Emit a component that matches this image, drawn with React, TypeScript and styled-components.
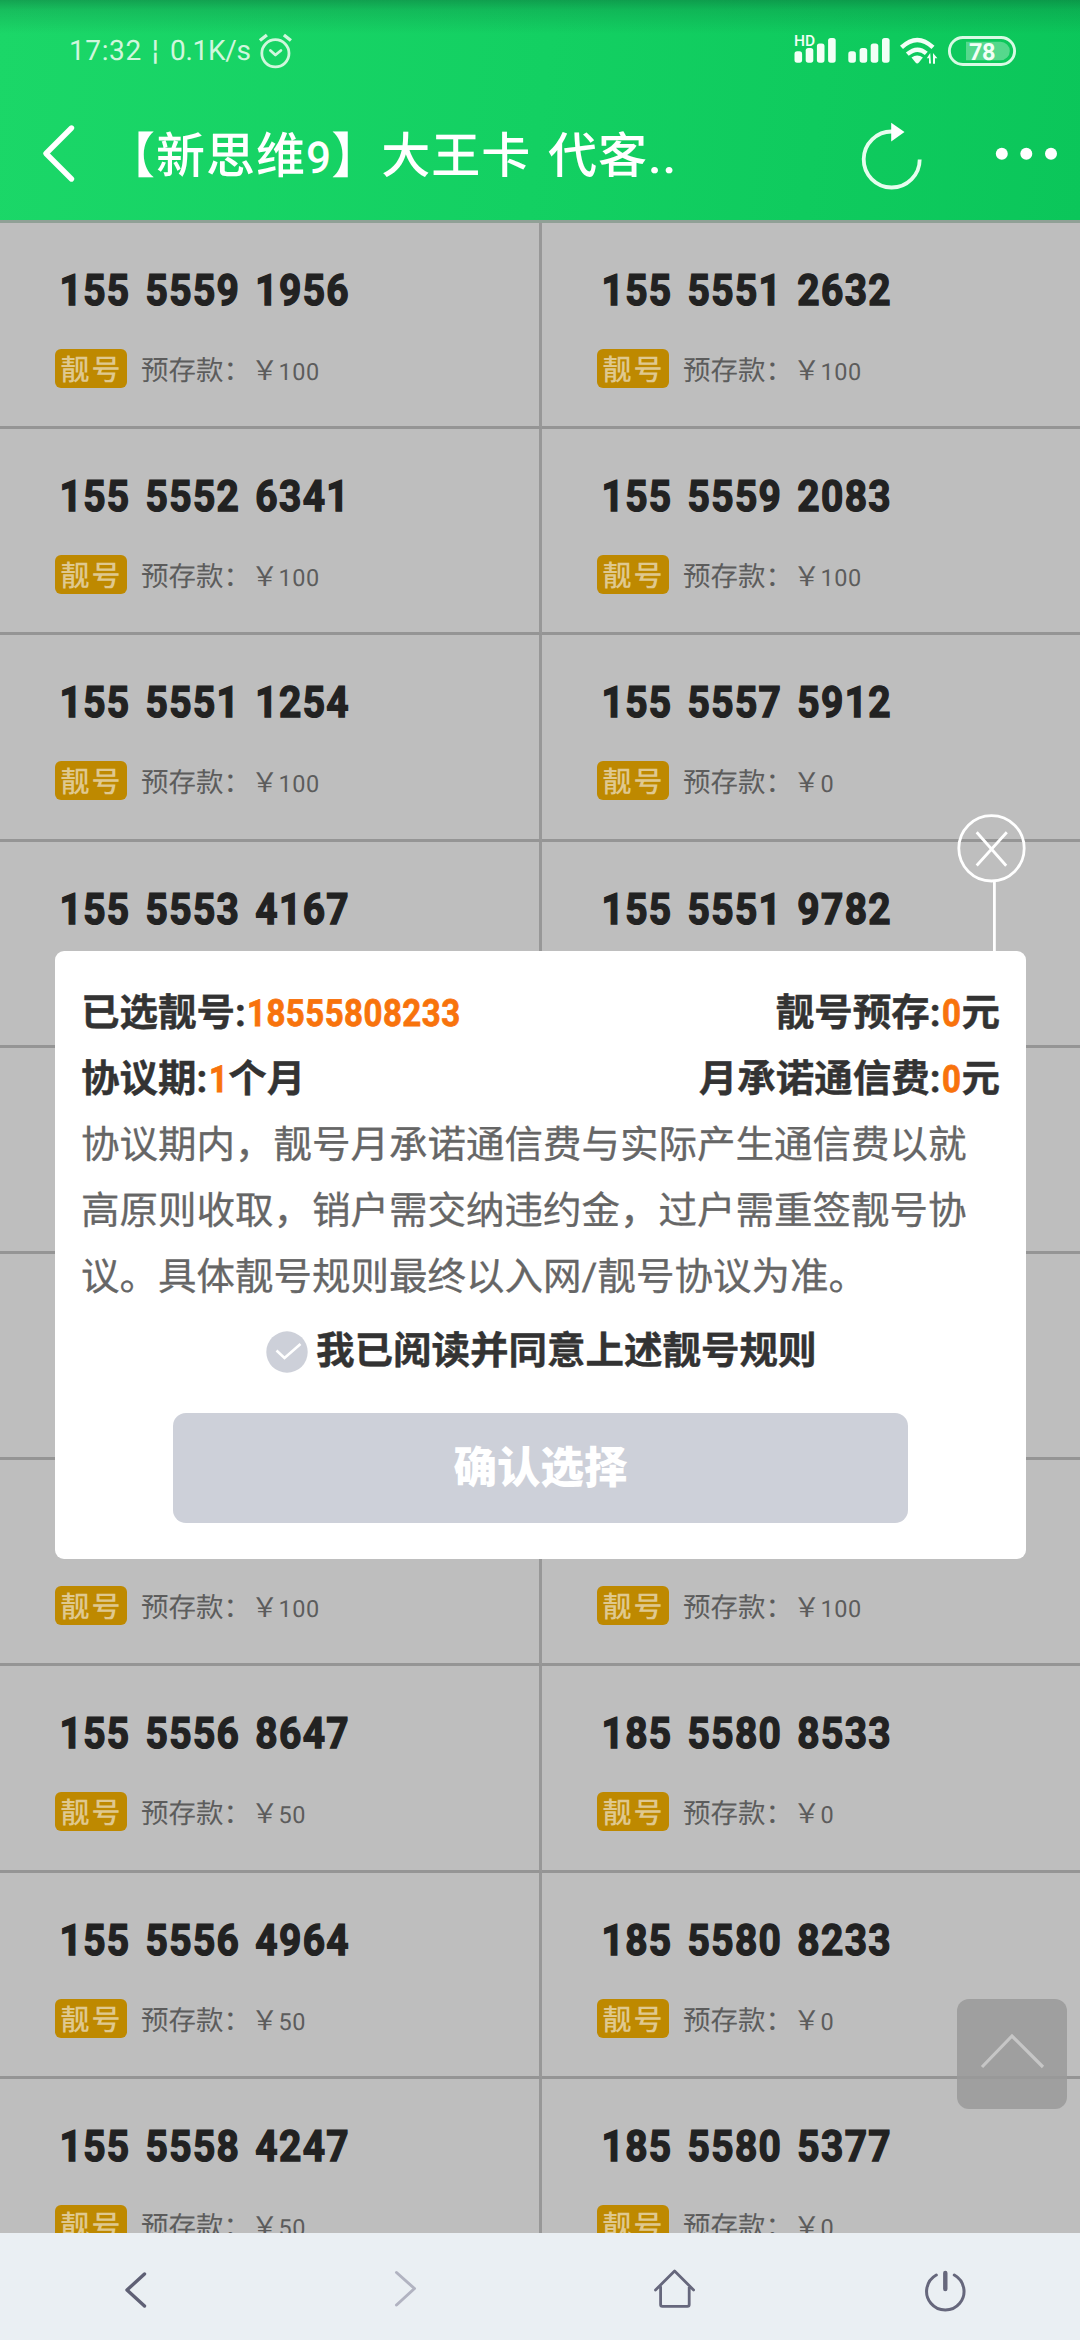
import React from 'react';
import styled, { createGlobalStyle } from 'styled-components';

const Global = createGlobalStyle`
  * { box-sizing: border-box; }
  html, body { margin: 0; padding: 0; }
  body {
    font-family: Roboto, "Noto Sans CJK SC", sans-serif;
    background: #bebebe;
    text-rendering: geometricPrecision;
  }
`;

const Screen = styled.div`
  position: relative;
  width: 1080px;
  height: 2340px;
  overflow: hidden;
  display: flex;
  flex-direction: column;
  background: #bebebe;
`;

const Header = styled.header`
  flex: none;
  height: 220px;
  display: flex;
  flex-direction: column;
  background:
    linear-gradient(180deg, rgba(10, 90, 50, 0.42) 0, rgba(10, 90, 50, 0.2) 10px, rgba(10, 90, 50, 0) 34px),
    linear-gradient(97deg, #1bd768 0%, #13d062 50%, #0bc65a 100%);
  color: #fff;
`;

const StatusBar = styled.div`
  height: 90px;
  display: flex;
  padding: 34px 64px 0 69px;
  justify-content: space-between;
`;

const StatusGroup = styled.div`
  display: flex;
  height: 34px;
  align-items: center;
`;

const StatusText = styled.span<{ $width: number; $spacing?: number }>`
  width: ${(p) => p.$width}px;
  font-size: 28px;
  line-height: 34px;
  letter-spacing: ${(p) => p.$spacing ?? 0}px;
  color: #d0f7dd;
  white-space: nowrap;
`;

const NavBar = styled.div`
  height: 130px;
  display: flex;
  align-items: flex-start;
  padding: 30px 22px 0 40px;
`;

const Title = styled.h1`
  margin: 4px 0 0 30px;
  flex: 1;
  font-size: 49px;
  line-height: 66px;
  font-weight: 500;
  letter-spacing: 1px;
  word-spacing: 3.5px;
  white-space: nowrap;
`;

const TitleDigit = styled.span`
  font-size: 44px;
  letter-spacing: 0.3px;
`;

const Icon = styled.svg`
  display: block;
  flex: none;
  overflow: visible;
`;

const RefreshButton = styled.div`
  width: 64px;
  margin-right: 72px;
`;

const List = styled.main`
  flex: 1;
  overflow: hidden;
  border-top: 3px solid #90a096;
`;

const Row = styled.div`
  display: grid;
  grid-template-columns: 542px 538px;
  height: 206.2px;
`;

const Cell = styled.div<{ $divider?: boolean }>`
  padding: 44px 0 0 55px;
  border-bottom: 3px solid #959595;
  border-right: ${(p) => (p.$divider ? '3px solid #989898' : '0')};
`;

const PhoneNumber = styled.div`
  height: 48px;
  padding-left: 5px;
  font-size: 43.2px;
  line-height: 48px;
  font-weight: 700;
  letter-spacing: 1.5px;
  word-spacing: 4.6px;
  color: #222;
  -webkit-text-stroke: 1.4px #222;
  white-space: nowrap;
  transform: scaleX(0.9);
  transform-origin: 0 50%;
`;

const DepositLine = styled.div`
  display: flex;
  height: 39px;
  margin-top: 34px;
`;

const Badge = styled.span`
  width: 72px;
  height: 39px;
  border-radius: 6px;
  background: #be8900;
  color: #dfc88f;
  font: 500 29px/38px "Noto Sans CJK SC", sans-serif;
  letter-spacing: 2px;
  padding-left: 5.5px;
`;

const Deposit = styled.span`
  margin-left: 14px;
  font: 400 27.5px/39px "Noto Sans CJK SC", sans-serif;
  color: #5c5c5c;
  white-space: nowrap;
`;

const Amount = styled.span`
  font-family: Roboto, sans-serif;
  font-size: 23.5px;
  letter-spacing: 0.5px;
`;

const Modal = styled.section`
  position: absolute;
  left: 55px;
  top: 951px;
  width: 971px;
  height: 608px;
  padding: 30px 26px 0;
  border-radius: 9px;
  background: #fff;
  color: #333;
  font-size: 38.5px;
  line-height: 66px;
`;

const InfoRow = styled.div`
  display: flex;
  justify-content: space-between;
  height: 66px;
  font-weight: 700;
  -webkit-text-stroke: 0.4px currentColor;
  white-space: nowrap;
`;

const Highlight = styled.span<{ $chars: number }>`
  display: inline-block;
  color: #f8730c;
  font-size: 37.5px;
  letter-spacing: 0.55px;
  -webkit-text-stroke: 0.8px #f8730c;
  transform: scaleX(0.88);
  transform-origin: 0 50%;
  margin-left: 1.5px;
  margin-right: ${(p) => -2.65 * p.$chars}px;
`;

const Rules = styled.p`
  margin: 0;
  color: #666;
  -webkit-text-stroke: 0.3px #666;
`;

const RuleLine = styled.span`
  display: block;
  height: 66px;
  white-space: nowrap;
`;

const Agreement = styled.div`
  display: flex;
  align-items: center;
  height: 66px;
  margin: 8px 0 28px 185px;
  font-weight: 700;
  -webkit-text-stroke: 0.4px currentColor;
  white-space: nowrap;
`;

const AgreementText = styled.span`
  margin-left: 8px;
`;

const ConfirmButton = styled.button`
  display: block;
  width: 735px;
  height: 110px;
  margin: 0 0 0 92px;
  padding: 0 0 6px;
  border: 0;
  border-radius: 13px;
  background: #cdd0d9;
  color: #fff;
  font: 900 43.5px/60px "Noto Sans CJK SC", sans-serif;
`;

const CloseHandle = styled.div`
  position: absolute;
  left: 957px;
  top: 814px;
`;

const BackToTop = styled.div`
  position: absolute;
  left: 957px;
  top: 1999px;
  width: 110px;
  height: 110px;
  border-radius: 12px;
  background: rgba(154, 154, 154, 0.87);
`;

const BottomBar = styled.nav`
  flex: none;
  height: 107px;
  display: grid;
  grid-template-columns: repeat(4, 1fr);
  align-items: start;
  justify-items: center;
  padding-top: 32px;
  background: #eaeff3;
`;

type Item = { num?: string; price?: string };

const rows: [Item, Item][] = [
  [{ num: '155 5559 1956', price: '100' }, { num: '155 5551 2632', price: '100' }],
  [{ num: '155 5552 6341', price: '100' }, { num: '155 5559 2083', price: '100' }],
  [{ num: '155 5551 1254', price: '100' }, { num: '155 5557 5912', price: '0' }],
  [{ num: '155 5553 4167' }, { num: '155 5551 9782' }],
  [{}, {}],
  [{}, {}],
  [{ price: '100' }, { price: '100' }],
  [{ num: '155 5556 8647', price: '50' }, { num: '185 5580 8533', price: '0' }],
  [{ num: '155 5556 4964', price: '50' }, { num: '185 5580 8233', price: '0' }],
  [{ num: '155 5558 4247', price: '50' }, { num: '185 5580 5377', price: '0' }],
];

function NumberCell({ item, divider }: { item: Item; divider?: boolean }) {
  return (
    <Cell $divider={divider}>
      <PhoneNumber>{item.num}</PhoneNumber>
      {item.price && (
        <DepositLine>
          <Badge>靓号</Badge>
          <Deposit>
            预存款：￥<Amount>{item.price}</Amount>
          </Deposit>
        </DepositLine>
      )}
    </Cell>
  );
}

function AlarmIcon() {
  return (
    <Icon width="34" height="36" viewBox="0 0 34 36" fill="none" stroke="#d0f7dd" strokeWidth="2.8" strokeLinecap="round" strokeLinejoin="round">
      <circle cx="17.4" cy="20.3" r="13.6" />
      <path d="M12.4 17.5 17.4 22 22.9 17.5" />
      <path d="M1.9 7.5 8.9 2M25.9 2l7 5.5" strokeWidth="3.4" strokeLinecap="butt" />
    </Icon>
  );
}

function StatusIcons() {
  return (
    <Icon width="222" height="34" viewBox="794 32 222 34">
      <g fill="#f2fff6">
        <rect x="794.5" y="49.3" width="7.6" height="11.4" rx="2.6" />
        <rect x="805.7" y="46" width="7.6" height="14.7" rx="2.6" />
        <rect x="816.9" y="41.4" width="7.6" height="19.3" rx="2.6" />
        <rect x="828.1" y="36" width="7.6" height="24.7" rx="2.6" />
        <rect x="848.3" y="49.3" width="7.6" height="11.4" rx="2.6" />
        <rect x="859.6" y="46" width="7.6" height="14.7" rx="2.6" />
        <rect x="870.7" y="41.4" width="7.6" height="19.3" rx="2.6" />
        <rect x="882" y="36" width="7.6" height="24.7" rx="2.6" />
        <path d="M911.5 55.5q5.7-4 11.4 0l-4 5q-1.7 1.8-3.4 0z" />
        <path d="M930.2 51l-3.4 5.2h2.2v5.3h2zM933 51v10.7h2v-5.4h2.4z" />
      </g>
      <text x="794" y="44.2" fontSize="15.5" fontWeight="500" fontFamily="Roboto, sans-serif" fill="#f2fff6">
        HD
      </text>
      <g fill="none" stroke="#f2fff6" strokeWidth="4.4">
        <path d="M901.5 45.4Q917.3 30.5 933 45.4" />
        <path d="M907.3 52.2q10-8.6 19 -0.8" />
      </g>
      <rect x="949.4" y="35.5" width="65.2" height="27" rx="13.5" fill="none" stroke="#d8fae4" strokeWidth="2.9" />
      <path d="M966 39.7h34.5a9.3 9.3 0 0 1 0 18.6H966z" fill="#fff" fillOpacity="0.3" />
      <text x="969" y="57.8" fontSize="23.5" fontWeight="700" fontFamily="Roboto, sans-serif" fill="#f2fff6" letterSpacing="-0.6">
        78
      </text>
    </Icon>
  );
}

export default function App() {
  return (
    <Screen lang="zh-CN">
      <Global />
      <Header>
        <StatusBar>
          <StatusGroup>
            <StatusText $width={83} $spacing={0.6}>17:32</StatusText>
            <StatusText $width={18}>¦</StatusText>
            <StatusText $width={88} $spacing={-0.3}>0.1K/s</StatusText>
            <AlarmIcon />
          </StatusGroup>
          <StatusIcons />
        </StatusBar>
        <NavBar>
          <Icon width="36" height="66" viewBox="40 121 36 66" fill="none" stroke="#fff" strokeWidth="5.4" strokeLinecap="round" strokeLinejoin="round">
            <path d="M71.5 129 46 154.5l25.5 25.5" />
          </Icon>
          <Title>
            【新思维<TitleDigit>9</TitleDigit>】大王卡 代客..
          </Title>
          <RefreshButton>
            <Icon width="64" height="70" viewBox="860 120 64 70">
              <path d="M892.3 131.5a28 28 0 1 0 27.4 28" fill="none" stroke="#e6fdee" strokeWidth="3.8" />
              <path d="M891.2 122.7 904.5 132l-13.3 9.5z" fill="#fff" />
            </Icon>
          </RefreshButton>
          <Icon width="62" height="66" viewBox="996 121 62 66" fill="#fff">
            <circle cx="1001.8" cy="154.7" r="6" />
            <circle cx="1026.3" cy="154.7" r="6" />
            <circle cx="1051" cy="154.7" r="6" />
          </Icon>
        </NavBar>
      </Header>

      <List>
        {rows.map(([left, right], i) => (
          <Row key={i}>
            <NumberCell item={left} divider />
            <NumberCell item={right} />
          </Row>
        ))}
      </List>

      <BottomBar>
        <Icon width="40" height="44" viewBox="115 2265 40 44" fill="none" stroke="#5f6075" strokeWidth="3.4" strokeLinecap="round" strokeLinejoin="round">
          <path d="M144.5 2274 127 2290l17.5 16" />
        </Icon>
        <Icon width="40" height="44" viewBox="385 2265 40 44" fill="none" stroke="#b1b3c1" strokeWidth="3" strokeLinecap="round" strokeLinejoin="round">
          <path d="M396.5 2272.5 414.5 2288.5l-18 16.5" />
        </Icon>
        <Icon width="44" height="44" viewBox="653 2265 44 44" fill="none" stroke="#66677c" strokeWidth="2.8" strokeLinecap="round" strokeLinejoin="round">
          <path d="M655.5 2290 674.6 2271l19 19M660.6 2287v17.5q0 1.8 1.8 1.8h25q1.8 0 1.8-1.8V2287" />
        </Icon>
        <Icon width="44" height="44" viewBox="923 2265 44 44" fill="none" stroke="#66677c" strokeWidth="3" strokeLinecap="round">
          <path d="M936.3 2275a18.7 18.7 0 1 0 18 0" />
          <path d="M945.3 2273v16" strokeWidth="4.4" />
        </Icon>
      </BottomBar>

      <BackToTop>
        <Icon width="110" height="110" viewBox="0 0 110 110" fill="none" stroke="#c6c6c6" strokeWidth="3.2">
          <path d="M25 68 55 37l31 31" />
        </Icon>
      </BackToTop>

      <CloseHandle>
        <Icon width="69" height="138" viewBox="957 814 69 138" fill="none" stroke="#fff" strokeWidth="2.8">
          <circle cx="991.5" cy="848.3" r="32.7" />
          <path d="M976.7 832.3 1006.2 865.7M1006.8 832.3 976.7 865.5" />
          <path d="M994.4 881v71" />
        </Icon>
      </CloseHandle>

      <Modal>
        <InfoRow>
          <span>已选靓号:<Highlight $chars={11}>18555808233</Highlight></span>
          <span>靓号预存:<Highlight $chars={1}>0</Highlight>元</span>
        </InfoRow>
        <InfoRow>
          <span>协议期:<Highlight $chars={1}>1</Highlight>个月</span>
          <span>月承诺通信费:<Highlight $chars={1}>0</Highlight>元</span>
        </InfoRow>
        <Rules>
          <RuleLine>协议期内，靓号月承诺通信费与实际产生通信费以就</RuleLine>
          <RuleLine>高原则收取，销户需交纳违约金，过户需重签靓号协</RuleLine>
          <RuleLine>议。具体靓号规则最终以入网/靓号协议为准。</RuleLine>
        </Rules>
        <Agreement>
          <Icon width="42" height="42" viewBox="0 0 42 42">
            <circle cx="21" cy="21" r="20.7" fill="#cdd0d9" />
            <path d="M10.5 19.5 18.5 27 34.5 13" fill="none" stroke="#fff" strokeWidth="2.6" />
          </Icon>
          <AgreementText>我已阅读并同意上述靓号规则</AgreementText>
        </Agreement>
        <ConfirmButton>确认选择</ConfirmButton>
      </Modal>
    </Screen>
  );
}
